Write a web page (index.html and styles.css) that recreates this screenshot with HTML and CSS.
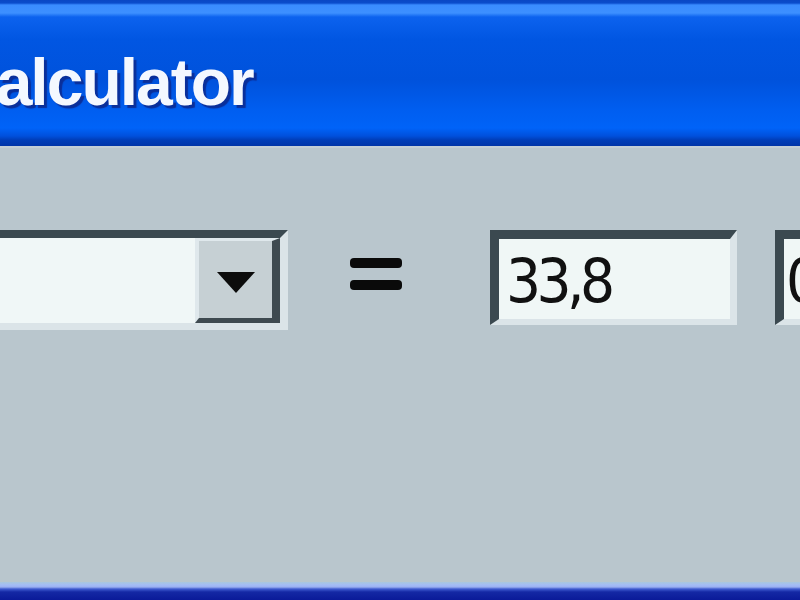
FILE: index.html
```html
<!DOCTYPE html>
<html>
<head>
<meta charset="utf-8">
<link rel="stylesheet" href="styles.css">
</head>
<body>
<div class="window">
  <div class="titlebar">
    <span class="title">Calculator</span>
  </div>
  <div class="client">
    <div class="row">
      <div class="combo">
        <div class="combo-field"></div>
        <div class="combo-btn"><span class="arrow"></span></div>
      </div>
      <div class="equals"><span class="bar"></span><span class="bar"></span></div>
      <div class="field"><span class="value">33,8</span></div>
      <div class="field field-next"><span class="value">0</span></div>
    </div>
  </div>
  <div class="bottom-border"></div>
</div>
</body>
</html>
```

FILE: styles.css
```css
html, body {
  margin: 0;
  padding: 0;
  width: 800px;
  height: 600px;
  overflow: hidden;
  background: #b9c6cd;
}

.window {
  width: 800px;
  height: 600px;
  display: flex;
  flex-direction: column;
  overflow: hidden;
}

.titlebar {
  height: 146px;
  flex: none;
  background: linear-gradient(to bottom,
    #0a47c4 0px, #0a4ccc 3px,
    #3a8cff 5px, #3d90ff 13px,
    #0c62ee 17px, #0156e2 40px,
    #0052dc 80px, #005ef0 110px,
    #0063f8 128px, #0050dc 136px,
    #003db8 140px, #0034a8 146px);
  overflow: hidden;
  white-space: nowrap;
}

.title {
  display: block;
  margin-left: -50px;
  padding-top: 44px;
  font-family: "Liberation Sans", "DejaVu Sans", sans-serif;
  font-weight: bold;
  font-size: 66px;
  line-height: 76px;
  letter-spacing: -2px;
  color: #f4f8ff;
  text-shadow: 3px 3px 1px #0a2f9a;
}

.client {
  flex: 1;
  background: #b9c6cd;
  border-top: 2px solid #c3ced6;
  overflow: hidden;
}

.row {
  display: flex;
  align-items: flex-start;
  padding-top: 82px;
  white-space: nowrap;
}

.combo {
  flex: none;
  display: flex;
  width: 372px;
  height: 85px;
  margin-left: -100px;
  border-top: 8px solid #3b4950;
  border-left: 8px solid #3b4950;
  border-right: 8px solid #dbe4e8;
  border-bottom: 7px solid #dbe4e8;
}

.combo-field {
  flex: 1;
  background: #f0f7f7;
}

.combo-btn {
  flex: none;
  width: 73px;
  height: 77px;
  background: #c6d0d4;
  border-top: 3px solid #dfe8ec;
  border-left: 4px solid #dfe8ec;
  border-right: 8px solid #3e4a50;
  border-bottom: 5px solid #3e4a50;
  display: flex;
  align-items: center;
  justify-content: center;
}

.arrow {
  width: 0;
  height: 0;
  border-left: 19px solid transparent;
  border-right: 19px solid transparent;
  border-top: 21px solid #0c0c0c;
  margin-top: 6px;
}

.equals {
  flex: none;
  margin-left: 62px;
  margin-top: 28px;
  width: 52px;
  display: flex;
  flex-direction: column;
  gap: 12px;
}

.bar {
  display: block;
  height: 10px;
  background: #0a0a0a;
  border-radius: 4px;
}

.field {
  flex: none;
  margin-left: 88px;
  width: 231px;
  height: 80px;
  background: #f0f7f6;
  border-top: 9px solid #3b4950;
  border-left: 9px solid #3b4950;
  border-right: 7px solid #dbe4e8;
  border-bottom: 6px solid #dbe4e8;
  display: flex;
  align-items: center;
  overflow: hidden;
}

.field-next {
  margin-left: 38px;
}

.value {
  margin-left: 7px;
  margin-top: 4px;
  font-family: "DejaVu Sans", "Liberation Sans", sans-serif;
  font-size: 60px;
  letter-spacing: -5px;
  color: #111;
  transform: scaleX(0.92);
  transform-origin: left center;
}

.field-next .value {
  margin-left: 2px;
}

.bottom-border {
  flex: none;
  height: 18px;
  background: linear-gradient(to bottom,
    #a9c7dd 0px, #a4bcf6 3px, #9bb0f0 5px,
    #3e5ad0 7px, #1428a4 10px, #0a1a98 18px);
}
```
